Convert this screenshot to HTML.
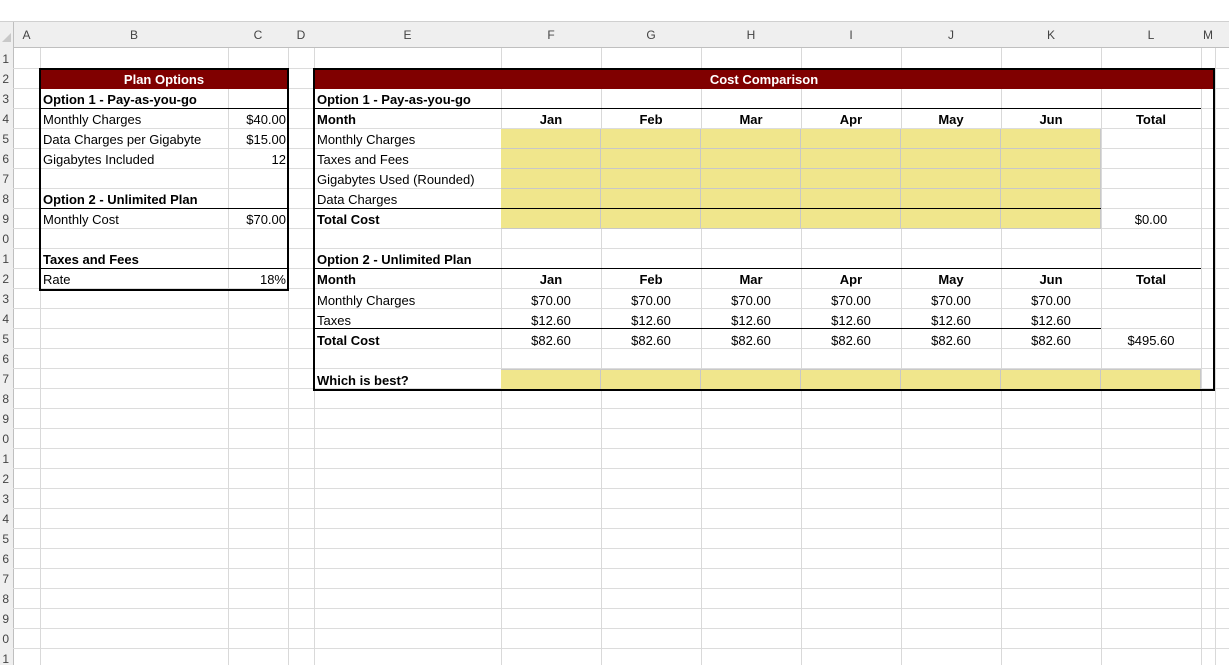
<!DOCTYPE html>
<html><head><meta charset="utf-8"><style>
body{margin:0;width:1229px;height:665px;overflow:hidden;background:#fff;font-family:"Liberation Sans",Arial,sans-serif;position:relative}
.a{position:absolute}
.h{position:absolute;top:22px;height:26px;line-height:26px;font-size:12px;color:#444;text-align:center}
.vl{position:absolute;top:48px;width:1px;height:617px;background:#d9d9d9}
.c{position:absolute;height:20px;line-height:21px;font-size:13px;color:#000;white-space:nowrap}
.b{font-weight:bold}
.ce{text-align:center;width:100px}
.r{text-align:right}
.rn{position:absolute;left:0;width:9px;text-align:right;font-size:12px;color:#444;height:20px;line-height:20px;overflow:hidden;direction:rtl}
</style></head><body>
<div class="a" style="left:0;top:21px;width:1229px;height:27px;background:#efefef;border-top:1px solid #d0d0d0;border-bottom:1px solid #bfbfbf;box-sizing:border-box"></div>
<div class="a" style="left:0;top:22px;width:13px;height:643px;background:#efefef;border-right:1px solid #bfbfbf"></div>
<div class="a" style="left:2px;top:33px;width:0;height:0;border-left:9px solid transparent;border-bottom:9px solid #c8c8c8"></div>
<div class="a" style="left:13px;top:49px;width:1216px;height:616px;background:repeating-linear-gradient(to bottom,transparent 0,transparent 19px,#dcdcdc 19px,#dcdcdc 20px)"></div>
<div class="vl" style="left:40px"></div><div class="vl" style="left:228px"></div><div class="vl" style="left:288px"></div><div class="vl" style="left:314px"></div><div class="vl" style="left:501px"></div><div class="vl" style="left:601px"></div><div class="vl" style="left:701px"></div><div class="vl" style="left:801px"></div><div class="vl" style="left:901px"></div><div class="vl" style="left:1001px"></div><div class="vl" style="left:1101px"></div><div class="vl" style="left:1201px"></div><div class="vl" style="left:1215px"></div>
<div class="h" style="left:13px;width:27px">A</div><div class="h" style="left:40px;width:188px">B</div><div class="h" style="left:228px;width:60px">C</div><div class="h" style="left:288px;width:26px">D</div><div class="h" style="left:314px;width:187px">E</div><div class="h" style="left:501px;width:100px">F</div><div class="h" style="left:601px;width:100px">G</div><div class="h" style="left:701px;width:100px">H</div><div class="h" style="left:801px;width:100px">I</div><div class="h" style="left:901px;width:100px">J</div><div class="h" style="left:1001px;width:100px">K</div><div class="h" style="left:1101px;width:100px">L</div><div class="h" style="left:1201px;width:14px">M</div>
<div class="rn" style="top:49px">1</div><div class="rn" style="top:69px">2</div><div class="rn" style="top:89px">3</div><div class="rn" style="top:109px">4</div><div class="rn" style="top:129px">5</div><div class="rn" style="top:149px">6</div><div class="rn" style="top:169px">7</div><div class="rn" style="top:189px">8</div><div class="rn" style="top:209px">9</div><div class="rn" style="top:229px">0</div><div class="rn" style="top:249px">1</div><div class="rn" style="top:269px">2</div><div class="rn" style="top:289px">3</div><div class="rn" style="top:309px">4</div><div class="rn" style="top:329px">5</div><div class="rn" style="top:349px">6</div><div class="rn" style="top:369px">7</div><div class="rn" style="top:389px">8</div><div class="rn" style="top:409px">9</div><div class="rn" style="top:429px">0</div><div class="rn" style="top:449px">1</div><div class="rn" style="top:469px">2</div><div class="rn" style="top:489px">3</div><div class="rn" style="top:509px">4</div><div class="rn" style="top:529px">5</div><div class="rn" style="top:549px">6</div><div class="rn" style="top:569px">7</div><div class="rn" style="top:589px">8</div><div class="rn" style="top:609px">9</div><div class="rn" style="top:629px">0</div><div class="rn" style="top:649px">1</div>

<!-- yellow -->
<div class="a" style="left:501px;top:129px;width:600px;height:100px;background:#f0e68c;background-image:repeating-linear-gradient(to bottom,transparent 0,transparent 19px,#c8c8c8 19px,#c8c8c8 20px),repeating-linear-gradient(to right,transparent 0,transparent 99px,#c8c8c8 99px,#c8c8c8 100px)"></div>
<div class="a" style="left:501px;top:369px;width:700px;height:20px;background:#f0e68c;background-image:repeating-linear-gradient(to right,transparent 0,transparent 99px,#c8c8c8 99px,#c8c8c8 100px);border-top:1px solid #c8c8c8;box-sizing:border-box"></div>

<!-- left box -->
<div class="a" style="left:39px;top:68px;width:250px;height:223px;border:2px solid #000;box-sizing:border-box"></div>
<div class="a" style="left:41px;top:70px;width:246px;height:19px;background:#800000"></div>
<div class="a" style="left:41px;top:108px;width:246px;height:1px;background:#000"></div>
<div class="a" style="left:41px;top:208px;width:246px;height:1px;background:#000"></div>
<div class="a" style="left:41px;top:268px;width:246px;height:1px;background:#000"></div>
<div class="c b" style="left:41px;top:69px;width:246px;text-align:center;color:#fff">Plan Options</div>
<div class="c b" style="left:43px;top:89px">Option 1 - Pay-as-you-go</div>
<div class="c" style="left:43px;top:109px">Monthly Charges</div><div class="c r" style="left:228px;top:109px;width:58px">$40.00</div>
<div class="c" style="left:43px;top:129px">Data Charges per Gigabyte</div><div class="c r" style="left:228px;top:129px;width:58px">$15.00</div>
<div class="c" style="left:43px;top:149px">Gigabytes Included</div><div class="c r" style="left:228px;top:149px;width:58px">12</div>
<div class="c b" style="left:43px;top:189px">Option 2 - Unlimited Plan</div>
<div class="c" style="left:43px;top:209px">Monthly Cost</div><div class="c r" style="left:228px;top:209px;width:58px">$70.00</div>
<div class="c b" style="left:43px;top:249px">Taxes and Fees</div>
<div class="c" style="left:43px;top:269px">Rate</div><div class="c r" style="left:228px;top:269px;width:58px">18%</div>

<!-- right box -->
<div class="a" style="left:313px;top:68px;width:902px;height:323px;border:2px solid #000;box-sizing:border-box"></div>
<div class="a" style="left:315px;top:70px;width:898px;height:19px;background:#800000"></div>
<div class="a" style="left:315px;top:108px;width:886px;height:1px;background:#000"></div>
<div class="a" style="left:315px;top:208px;width:786px;height:1px;background:#000"></div>
<div class="a" style="left:315px;top:268px;width:886px;height:1px;background:#000"></div>
<div class="a" style="left:315px;top:328px;width:786px;height:1px;background:#000"></div>
<div class="c b" style="left:315px;top:69px;width:898px;text-align:center;color:#fff">Cost Comparison</div>
<div class="c b" style="left:317px;top:89px">Option 1 - Pay-as-you-go</div>
<div class="c b" style="left:317px;top:109px">Month</div>
<div class="c" style="left:317px;top:129px">Monthly Charges</div>
<div class="c" style="left:317px;top:149px">Taxes and Fees</div>
<div class="c" style="left:317px;top:169px">Gigabytes Used (Rounded)</div>
<div class="c" style="left:317px;top:189px">Data Charges</div>
<div class="c b" style="left:317px;top:209px">Total Cost</div>
<div class="c b" style="left:317px;top:249px">Option 2 - Unlimited Plan</div>
<div class="c b" style="left:317px;top:269px">Month</div>
<div class="c" style="left:317px;top:290px">Monthly Charges</div>
<div class="c" style="left:317px;top:310px">Taxes</div>
<div class="c b" style="left:317px;top:330px">Total Cost</div>
<div class="c b" style="left:317px;top:370px">Which is best?</div>

<div class="c b ce" style="left:501px;top:109px">Jan</div><div class="c b ce" style="left:601px;top:109px">Feb</div><div class="c b ce" style="left:701px;top:109px">Mar</div><div class="c b ce" style="left:801px;top:109px">Apr</div><div class="c b ce" style="left:901px;top:109px">May</div><div class="c b ce" style="left:1001px;top:109px">Jun</div><div class="c b ce" style="left:1101px;top:109px">Total</div>
<div class="c ce" style="left:1101px;top:209px">$0.00</div>
<div class="c b ce" style="left:501px;top:269px">Jan</div><div class="c b ce" style="left:601px;top:269px">Feb</div><div class="c b ce" style="left:701px;top:269px">Mar</div><div class="c b ce" style="left:801px;top:269px">Apr</div><div class="c b ce" style="left:901px;top:269px">May</div><div class="c b ce" style="left:1001px;top:269px">Jun</div><div class="c b ce" style="left:1101px;top:269px">Total</div>
<div class="c ce" style="left:501px;top:290px">$70.00</div><div class="c ce" style="left:601px;top:290px">$70.00</div><div class="c ce" style="left:701px;top:290px">$70.00</div><div class="c ce" style="left:801px;top:290px">$70.00</div><div class="c ce" style="left:901px;top:290px">$70.00</div><div class="c ce" style="left:1001px;top:290px">$70.00</div>
<div class="c ce" style="left:501px;top:310px">$12.60</div><div class="c ce" style="left:601px;top:310px">$12.60</div><div class="c ce" style="left:701px;top:310px">$12.60</div><div class="c ce" style="left:801px;top:310px">$12.60</div><div class="c ce" style="left:901px;top:310px">$12.60</div><div class="c ce" style="left:1001px;top:310px">$12.60</div>
<div class="c ce" style="left:501px;top:330px">$82.60</div><div class="c ce" style="left:601px;top:330px">$82.60</div><div class="c ce" style="left:701px;top:330px">$82.60</div><div class="c ce" style="left:801px;top:330px">$82.60</div><div class="c ce" style="left:901px;top:330px">$82.60</div><div class="c ce" style="left:1001px;top:330px">$82.60</div><div class="c ce" style="left:1101px;top:330px">$495.60</div>
</body></html>
